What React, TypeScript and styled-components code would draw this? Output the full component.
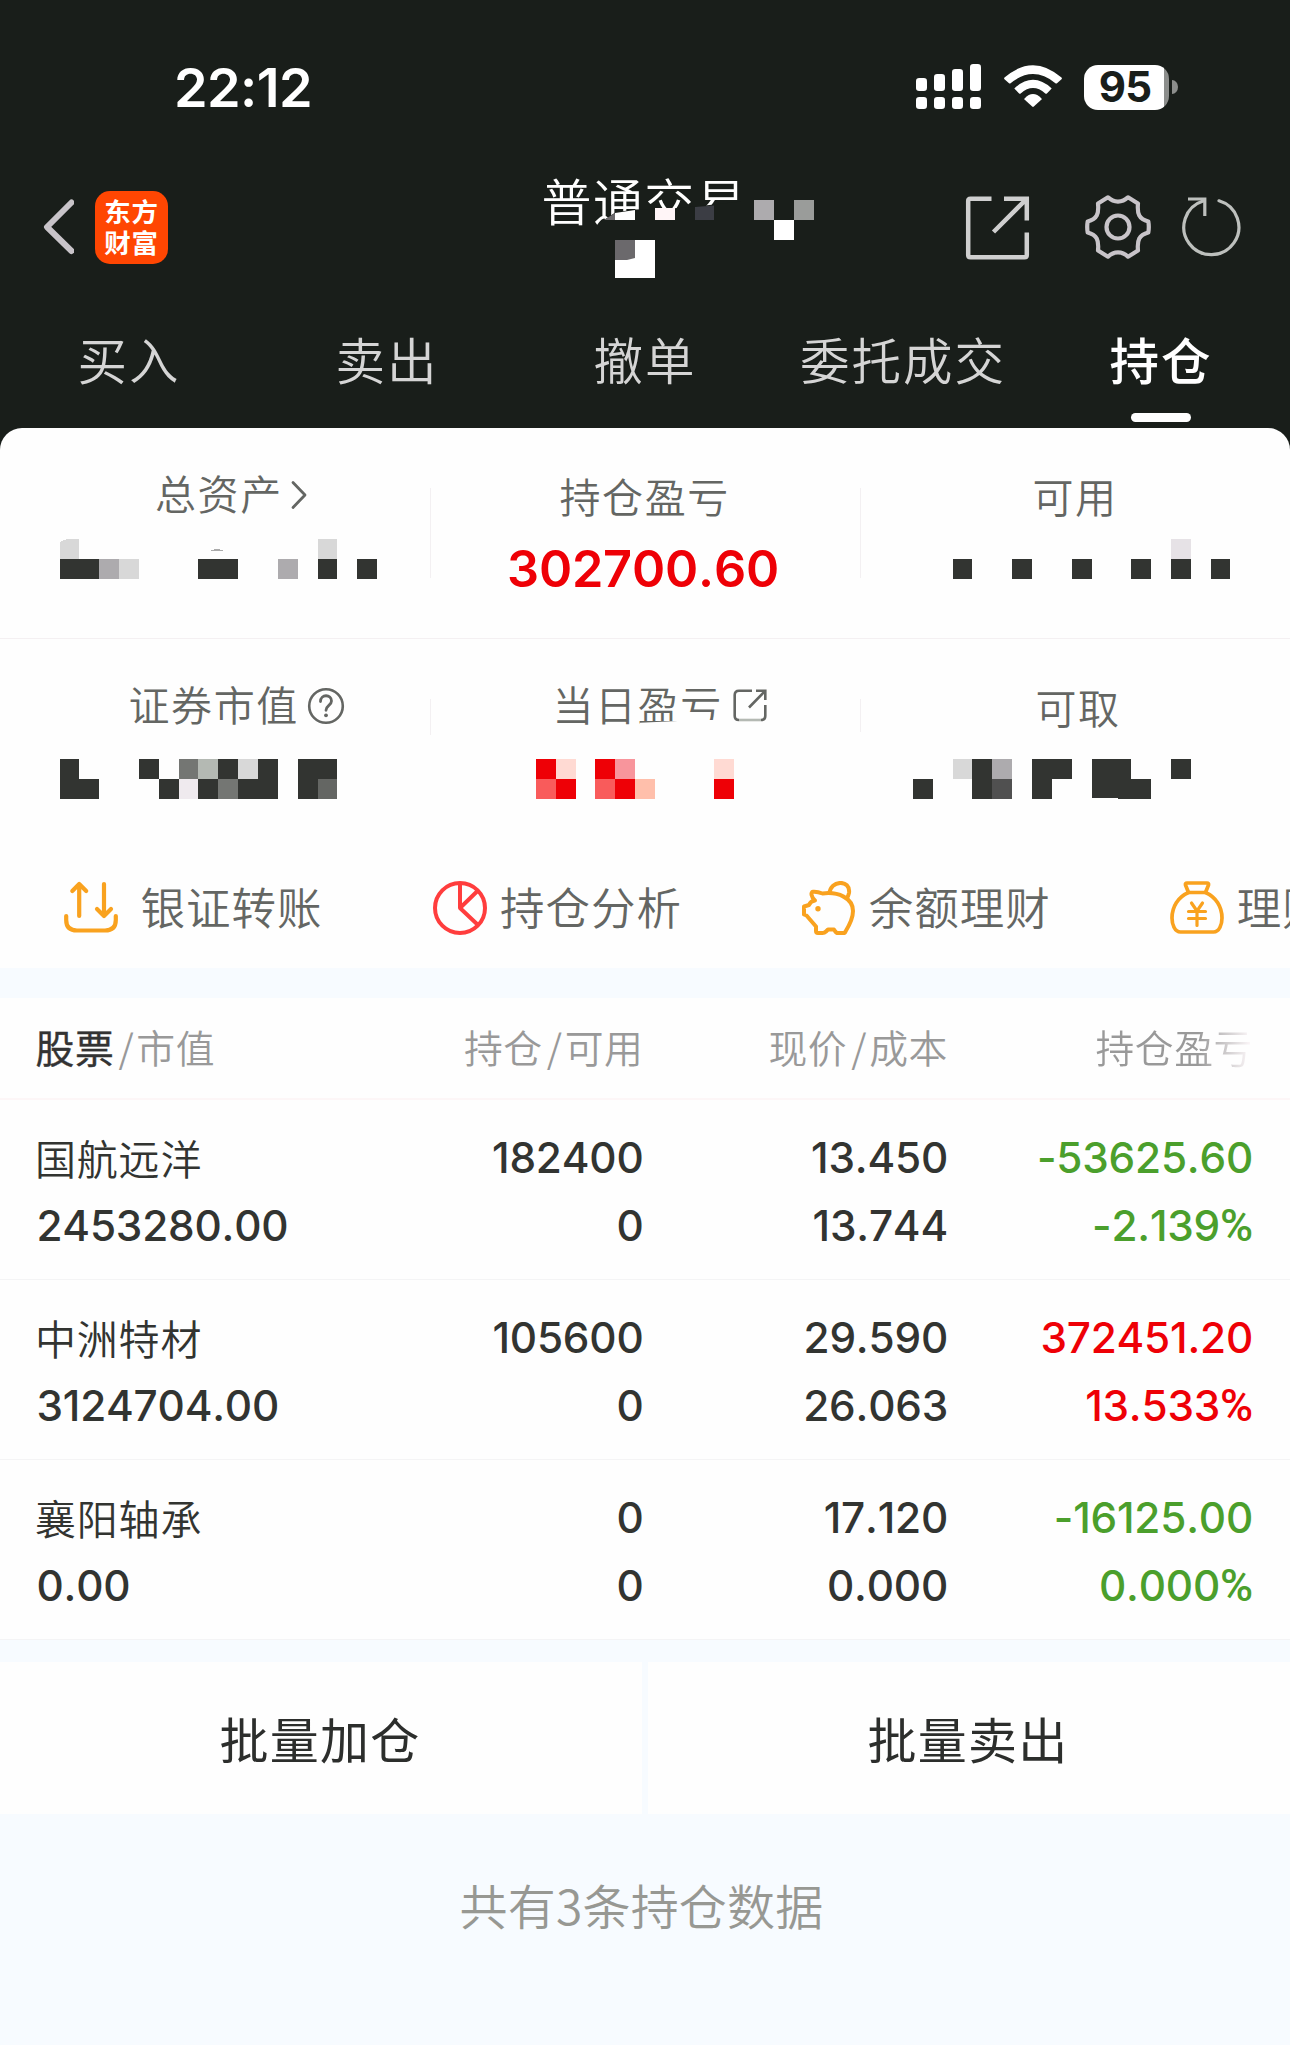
import React from "react";
import styled, { createGlobalStyle } from "styled-components";

const CJK = `"Noto Sans CJK SC", "Noto Sans", sans-serif`;
const NUM = `Inter, "Noto Sans CJK SC", sans-serif`;
const DARK = "#323431";
const RED = "#ee0006";
const GREEN = "#4b9f2c";
const INK = "#191e1a";

const Global = createGlobalStyle`
  *, *::before, *::after { box-sizing: border-box; }
  body { margin: 0; background: #f7fbff; font-family: ${CJK}; }
`;

const Screen = styled.div`
  width: 1290px;
  height: 2045px;
  display: flex;
  flex-direction: column;
  overflow: hidden;
  background: #f7fbff;
`;

const Top = styled.header`
  background: ${INK};
`;

const StatusBar = styled.div`
  height: 174px;
  padding: 0 112px 0 174px;
  display: flex;
  align-items: center;
  justify-content: space-between;
`;

const Clock = styled.span`
  padding-top: 1px;
  font: 600 54px/60px ${NUM};
  letter-spacing: -0.6px;
  color: #fff;
`;

const StatusIcons = styled.div`
  display: flex;
  align-items: center;
  gap: 22.5px;
`;

const Battery = styled.div`
  display: flex;
  align-items: center;
  gap: 3px;
`;

const BatteryBody = styled.span`
  width: 85px;
  height: 45px;
  border-radius: 14px;
  display: flex;
  align-items: center;
  justify-content: center;
  padding-right: 3px;
  background: linear-gradient(90deg, #fff 80px, #8c8e8c 80px);
  color: ${INK};
  font: 650 42px/44px ${NUM};
  letter-spacing: -0.8px;
`;

const BatteryTip = styled.span`
  width: 6px;
  height: 14px;
  border-radius: 0 6px 6px 0 / 0 7px 7px 0;
  background: #8c8e8c;
`;

const NavBar = styled.div`
  height: 106px;
  display: grid;
  grid-template-columns: 541.5px 1fr auto;
  align-items: center;
`;

const NavLeft = styled.div`
  display: flex;
  align-items: center;
  gap: 21px;
  padding-left: 43px;
`;

const AppBadge = styled.div`
  width: 73px;
  height: 73px;
  border-radius: 15px;
  background: #ff4602;
  color: #fff;
  display: flex;
  flex-direction: column;
  align-items: center;
  justify-content: center;
  font: 700 26.5px/31px ${CJK};
  letter-spacing: 0.8px;
  padding-bottom: 3px;
`;

const Title = styled.h1`
  position: relative;
  align-self: start;
  margin: 0;
  font: 350 50px/60px ${CJK};
  letter-spacing: 1.4px;
  color: #fff;
  margin-top: -5px;
`;

const TitleMask = styled.svg`
  position: absolute;
  left: 58.5px;
  top: 29px;
`;

const NavActions = styled.div`
  display: flex;
  align-items: center;
  padding-right: 46px;
`;

const Spacer = styled.span<{ $w: number }>`
  width: ${(p) => p.$w}px;
`;

const Tabs = styled.nav`
  height: 148px;
  padding-top: 49px;
  display: grid;
  grid-template-columns: repeat(5, 1fr);
`;

const Tab = styled.div<{ $active?: boolean }>`
  display: flex;
  flex-direction: column;
  align-items: center;
  gap: 24px;
  font: ${(p) => (p.$active ? 500 : 350)} 49.5px/60px ${CJK};
  letter-spacing: 2px;
  color: ${(p) => (p.$active ? "#fff" : "#d5d5d5")};
`;

const TabMark = styled.span`
  width: 60px;
  height: 9px;
  border-radius: 4.5px;
  background: #fff;
`;

const CardBack = styled.div`
  background: ${INK};
`;

const Card = styled.section`
  height: 540px;
  border-radius: 22px 22px 0 0;
  background: #fefefe;
  overflow: hidden;
`;

const SummaryRow = styled.div<{ $line?: boolean }>`
  height: 211px;
  display: grid;
  grid-template-columns: repeat(3, 430px);
  border-bottom: 1px solid ${(p) => (p.$line ? "#f4f0f2" : "transparent")};
`;

const SummaryCell = styled.div<{ $pad: number; $rule?: number }>`
  padding-top: ${(p) => p.$pad}px;
  background: ${(p) =>
    p.$rule ? `linear-gradient(#f3f0f2, #f3f0f2) 0 60px / 1px ${p.$rule}px no-repeat` : "none"};
`;

const SummaryLabel = styled.div<{ $left: number; $gap: number; $bottom: number }>`
  position: relative;
  height: 60px;
  margin-bottom: ${(p) => p.$bottom}px;
  padding-left: ${(p) => p.$left}px;
  display: flex;
  align-items: center;
  gap: ${(p) => p.$gap}px;
  font: 350 41px/60px ${CJK};
  letter-spacing: 1.6px;
  color: #646663;
`;

const LabelIcon = styled.svg`
  margin-top: 5px;
`;

const LabelMask = styled.svg`
  position: absolute;
  left: 190px;
  top: 40px;
`;

const SummaryValue = styled.div`
  font: 600 50.4px/59px ${NUM};
  font-kerning: none;
  letter-spacing: -0.2px;
  color: ${RED};
  text-align: center;
  padding-right: 4px;
`;

const QuickRow = styled.div`
  height: 118px;
  display: grid;
  grid-template-columns: 368.9px 368.9px 368px 368px;
  padding-left: 64px;
`;

const QuickItem = styled.div<{ $gap?: number }>`
  display: flex;
  align-items: center;
  gap: ${(p) => p.$gap ?? 13}px;
  white-space: nowrap;
  font: 350 44.5px/60px ${CJK};
  letter-spacing: 1px;
  color: #646663;
`;

const QuickText = styled.span`
  margin-top: -6px;
`;

const Table = styled.section`
  margin-top: 30px;
  background: #fefefe;
`;

const gridColumns = `
  display: grid;
  grid-template-columns: 300px 308px 304.5px 305px;
  padding-left: 35.5px;
`;

const TableHead = styled.div`
  ${gridColumns}
  height: 102px;
  padding-top: 18px;
  border-bottom: 2px solid #fdf6f7;
  font: 350 38.8px/60px ${CJK};
  letter-spacing: 0.6px;
  color: #999;
`;

const HeadCell = styled.div<{ $right?: boolean; $fade?: boolean }>`
  display: flex;
  justify-content: ${(p) => (p.$right ? "flex-end" : "flex-start")};
  color: ${(p) => (p.$fade ? "transparent" : "inherit")};
  background: ${(p) => (p.$fade ? "linear-gradient(90deg, #999 250px, #fbf6f8 302px)" : "none")};
  -webkit-background-clip: ${(p) => (p.$fade ? "text" : "border-box")};
  background-clip: ${(p) => (p.$fade ? "text" : "border-box")};
`;

const HeadStrong = styled.b`
  font-weight: 400;
  color: #333;
  -webkit-text-stroke: 0.4px #333;
`;

const Slash = styled.span`
  width: 22px;
  padding-left: 2px;
  text-align: center;
`;

const TableRow = styled.div`
  ${gridColumns}
  height: 180px;
  padding-top: 24px;
  border-bottom: 1px solid #f4f4f5;
`;

const StockCell = styled.div`
  display: flex;
  flex-direction: column;
  padding-left: 1px;
`;

const StockName = styled.span`
  font: 350 41px/66px ${CJK};
  letter-spacing: 0.8px;
  color: ${DARK};
  margin: 0 0 2px -1.5px;
`;

const Figure = styled.span<{ $color?: string }>`
  font: 550 42.3px/68px ${NUM};
  font-kerning: none;
  letter-spacing: -0.2px;
  color: ${(p) => p.$color ?? DARK};
`;

const Percent = styled.span`
  font-family: Roboto, sans-serif;
  font-weight: 500;
  font-size: 45px;
  line-height: 1;
`;

const FigureCell = styled.div`
  display: flex;
  flex-direction: column;
  align-items: flex-end;
`;

const Batch = styled.div`
  margin-top: 22px;
  height: 152px;
  display: grid;
  grid-template-columns: 1fr 1fr;
  gap: 6px;
`;

const BatchButton = styled.button`
  border: 0;
  padding: 0 2px 0 0;
  background: #fefefe;
  color: #2c2e2c;
  font: 400 49px/60px ${CJK};
  letter-spacing: 1.2px;
`;

const Footer = styled.p`
  margin: 60px 0 0;
  padding-right: 7px;
  text-align: center;
  font: 350 48px/60px ${CJK};
  letter-spacing: 0.2px;
  color: #979893;
`;

type Block = [x: number, y: number, w: number, h: number, fill?: string];

function Mosaic({ x, y, blocks, children }: { x: number; y: number; blocks: Block[]; children?: React.ReactNode }) {
  return (
    <svg width="430" height="40" viewBox={`${x} ${y} 430 40`} shapeRendering="crispEdges" display="block">
      {blocks.map(([bx, by, w, h, fill], i) => (
        <rect key={i} x={bx} y={by} width={w} height={h} fill={fill ?? DARK} />
      ))}
      {children}
    </svg>
  );
}

const totalBlocks: Block[] = [
  [60, 559, 39, 20], [99, 559, 20, 20, "#adabae"], [119, 559, 20, 20, "#d8d8d8"],
  [198, 559, 40, 20], [278, 559, 20, 20, "#adabae"], [318, 539, 19, 20, "#d8d8d8"],
  [318, 559, 19, 20], [357, 559, 20, 20],
];
const usableBlocks: Block[] = [
  [953, 559, 19, 20], [1012, 559, 20, 20], [1072, 559, 20, 20], [1131, 559, 20, 20],
  [1171, 539, 20, 20, "#e6e2e6"], [1171, 559, 20, 20], [1211, 559, 19, 20],
];
const marketBlocks: Block[] = [
  [60, 759, 19, 20], [60, 779, 39, 20], [139, 759, 20, 20], [159, 779, 20, 20],
  [179, 759, 19, 20, "#747673"], [179, 779, 19, 20, "#efeaee"], [198, 759, 20, 20, "#b4b9b3"],
  [198, 779, 20, 20], [218, 759, 20, 20], [218, 779, 20, 20, "#747673"],
  [238, 759, 20, 20, "#d8d8d8"], [238, 779, 20, 20], [258, 759, 20, 40],
  [298, 759, 39, 20], [298, 779, 20, 20], [318, 779, 19, 20, "#646663"],
];
const todayBlocks: Block[] = [
  [536, 759, 20, 20, RED], [556, 759, 20, 20, "#ffdad3"], [536, 779, 20, 20, "#f95b5b"],
  [556, 779, 20, 20, RED], [595, 759, 20, 20, RED], [615, 759, 20, 20, "#f8959c"],
  [595, 779, 20, 20, "#f95b5b"], [615, 779, 20, 20, RED], [635, 779, 20, 20, "#ffbfab"],
  [714, 759, 20, 20, "#ffdad3"], [714, 779, 20, 20, RED],
];
const drawableBlocks: Block[] = [
  [913, 779, 20, 20], [953, 759, 19, 20, "#d8d8d8"], [972, 759, 20, 40],
  [992, 759, 20, 20, "#adabae"], [992, 779, 20, 20, "#505050"], [1032, 759, 40, 20],
  [1032, 779, 20, 20], [1092, 759, 39, 20], [1131, 779, 20, 20], [1171, 759, 20, 20],
];

function Signal() {
  const tops = [78, 74, 69, 64];
  return (
    <svg width="65" height="46" viewBox="916 64 65 46" fill="#fff">
      {tops.map((t, i) => (
        <g key={t}>
          <rect x={916 + i * 18} y={t} width="11" height={91 - t} rx="3.2" />
          <rect x={916 + i * 18} y="97" width="11" height="12" rx="3.2" />
        </g>
      ))}
    </svg>
  );
}

function Wifi() {
  return (
    <svg width="58" height="44" viewBox="1003.5 65 58 44" fill="#fff">
      <path d="M1004 77.6 Q1032.5 52.8 1061 77.6 Q1061.8 78.4 1061 79.2 L1056.5 83.2 Q1055.7 83.8 1054.9 83.2 Q1032.5 65 1010.1 83.2 Q1009.3 83.8 1008.5 83.2 L1004 79.2 Q1003.2 78.4 1004 77.6 Z" />
      <path d="M1013.8 88.4 Q1032.5 71.2 1051.2 88.4 L1046.4 93.4 Q1045.6 94.1 1044.8 93.4 Q1032.5 82.7 1020.2 93.4 Q1019.4 94.1 1018.6 93.4 Z" />
      <path d="M1024 98.4 Q1032.5 89.6 1041 98.4 Q1041.4 99 1041 99.6 L1033.3 106.6 Q1032.5 107.3 1031.7 106.6 L1024 99.6 Q1023.6 99 1024 98.4 Z" />
    </svg>
  );
}

function Gear() {
  return (
    <svg width="70" height="70" viewBox="-35 -35 70 70" fill="none" stroke="#c8c4c9" strokeWidth="4.2" strokeLinejoin="round">
      <path d="M-10 -29.7 C-4 -24 4 -24 10 -29.7 L20 -23.5 C19 -13 21 -8 30.3 -5.5 Q31.3 0 30.3 5.5 C21 8 19 13 20 23.5 L10 29.7 C4 24 -4 24 -10 29.7 L-20 23.5 C-19 13 -21 8 -30.3 5.5 Q-31.3 0 -30.3 -5.5 C-21 -8 -19 -13 -20 -23.5 Z" />
      <circle r="11.5" />
    </svg>
  );
}

const rows = [
  { name: "国航远洋", value: "2453280.00", hold: "182400", free: "0", price: "13.450", cost: "13.744", pl: "-53625.60", pct: "-2.139", color: GREEN },
  { name: "中洲特材", value: "3124704.00", hold: "105600", free: "0", price: "29.590", cost: "26.063", pl: "372451.20", pct: "13.533", color: RED },
  { name: "襄阳轴承", value: "0.00", hold: "0", free: "0", price: "17.120", cost: "0.000", pl: "-16125.00", pct: "0.000", color: GREEN },
];

export default function App() {
  return (
    <Screen>
      <Global />
      <Top>
        <StatusBar>
          <Clock>22:12</Clock>
          <StatusIcons>
            <Signal />
            <Wifi />
            <Battery>
              <BatteryBody>95</BatteryBody>
              <BatteryTip />
            </Battery>
          </StatusIcons>
        </StatusBar>
        <NavBar>
          <NavLeft>
            <svg width="31" height="56" viewBox="43 199 31 56" fill="none" stroke="#c8c4c9" strokeWidth="6" strokeLinecap="round" strokeLinejoin="round">
              <path d="M71.5 202.5 L47 227 L71.5 251" />
            </svg>
            <AppBadge>
              <span>东方</span>
              <span>财富</span>
            </AppBadge>
          </NavLeft>
          <Title>
            普通交易
            <TitleMask width="216" height="82" viewBox="600 198 216 82">
              <path d="M604 220 L616 212 L636 209.5 L680 208 L705 205.5 L741 201.5 V234 H604 Z" fill={INK} />
              <path d="M604 220 L615 213 V220 Z" fill="#6b696c" />
              <path d="M615 213 L635 210 V220 H615 Z" fill="#fff" />
              <rect x="655" y="208" width="20" height="12" fill="#fff5f7" />
              <path d="M695 207 L714 205.5 V220 H695 Z" fill="#3b3d44" />
              <rect x="754" y="200" width="20" height="20" fill="#adabae" />
              <rect x="794" y="200" width="20" height="20" fill="#9a9c9a" />
              <rect x="774" y="220" width="20" height="20" fill="#fff" />
              <path d="M615 240 H655 V278 H615 Z" fill="#fff" />
              <path d="M615 240 H635 V258 L627 260 H615 Z" fill="#6b696c" />
            </TitleMask>
          </Title>
          <NavActions>
            <svg width="66" height="66" viewBox="965 194.5 66 66" fill="none" stroke="#cfcfcf" strokeWidth="4.5">
              <path d="M991.5 199.2 H970.5 Q968.2 199.2 968.2 201.5 V255.5 Q968.2 257.8 970.5 257.8 H1024.5 Q1026.8 257.8 1026.8 255.5 V233" />
              <path d="M1004 199.2 H1026.8 V221 M1026 200 L993.5 232.5" />
            </svg>
            <Spacer $w={52} />
            <Gear />
            <Spacer $w={29.5} />
            <svg width="62" height="66" viewBox="1182 195 62 66" fill="none" stroke="#bdc0bd" strokeWidth="3.2" strokeLinecap="round">
              <path d="M1219 201.8 A27.5 27.5 0 1 1 1203 202" />
              <path d="M1188 200 H1204.8 V217" strokeLinecap="butt" />
            </svg>
          </NavActions>
        </NavBar>
        <Tabs>
          <Tab>买入</Tab>
          <Tab>卖出</Tab>
          <Tab>撤单</Tab>
          <Tab>委托成交</Tab>
          <Tab $active>
            持仓
            <TabMark />
          </Tab>
        </Tabs>
      </Top>

      <CardBack>
        <Card>
          <SummaryRow $line>
            <SummaryCell $pad={34}>
              <SummaryLabel $left={155} $gap={7} $bottom={17}>
                总资产
                <LabelIcon width="18" height="30" viewBox="290 480.5 18 30" fill="none" stroke="#646663" strokeWidth="2.8" strokeLinecap="round" strokeLinejoin="round">
                  <path d="M293 483 L305 495.5 L293 508" />
                </LabelIcon>
              </SummaryLabel>
              <Mosaic x={0} y={539} blocks={totalBlocks}>
                <path d="M60 542 L67 539 H79 V559 H60 Z" fill="#d8d8d8" />
                <path d="M211 550.5 Q217 547.5 223 550.5 Z" fill="#aaa" />
              </Mosaic>
            </SummaryCell>
            <SummaryCell $pad={37} $rule={90}>
              <SummaryLabel $left={129.5} $gap={0} $bottom={14}>持仓盈亏</SummaryLabel>
              <SummaryValue>302700.60</SummaryValue>
            </SummaryCell>
            <SummaryCell $pad={37} $rule={90}>
              <SummaryLabel $left={172.5} $gap={0} $bottom={14}>可用</SummaryLabel>
              <Mosaic x={860} y={539} blocks={usableBlocks} />
            </SummaryCell>
          </SummaryRow>
          <SummaryRow>
            <SummaryCell $pad={34}>
              <SummaryLabel $left={128.5} $gap={8.5} $bottom={26}>
                证券市值
                <LabelIcon width="38" height="38" viewBox="0 0 38 38" fill="none" stroke="#646663" strokeWidth="2.6" strokeLinecap="round">
                  <circle cx="19" cy="19" r="16.8" />
                  <path d="M13.5 14.5 C13.5 6.8 24.5 7 24.5 14 C24.5 18.5 19 18.3 19 23.3" strokeWidth="2.8" />
                  <circle cx="19" cy="28.3" r="1.9" fill="#646663" stroke="none" />
                </LabelIcon>
              </SummaryLabel>
              <Mosaic x={0} y={759} blocks={marketBlocks} />
            </SummaryCell>
            <SummaryCell $pad={34} $rule={36}>
              <SummaryLabel $left={122.5} $gap={9.5} $bottom={26}>
                当日盈亏
                <LabelIcon width="36" height="36" viewBox="732 687 36 36" fill="none" stroke="#646663" strokeWidth="2.6">
                  <path d="M752 689.7 H739 Q734.7 689.7 734.7 694 V715 Q734.7 719 739 719" />
                  <path d="M765.3 704 V715 Q765.3 719 761 719" />
                  <path d="M739 719 H761" stroke="#b4b9b3" />
                  <path d="M756 689.7 H765.3 V699 M765 690 L749 706.5" />
                </LabelIcon>
                <LabelMask width="106" height="16" viewBox="620 713 106 16">
                  <path d="M640 722.8 L678 721 L684 720 H724 V729 H640 Z" fill="#fefefe" />
                </LabelMask>
              </SummaryLabel>
              <Mosaic x={430} y={759} blocks={todayBlocks} />
            </SummaryCell>
            <SummaryCell $pad={37} $rule={33}>
              <SummaryLabel $left={175.5} $gap={0} $bottom={23}>可取</SummaryLabel>
              <Mosaic x={860} y={759} blocks={drawableBlocks}>
                <path d="M1092 779 H1131 V799 L1092 797.5 Z" fill={DARK} />
              </Mosaic>
            </SummaryCell>
          </SummaryRow>
          <QuickRow>
            <QuickItem $gap={22.5}>
              <svg width="54" height="56" viewBox="64 881 54 56" fill="none" stroke="#f9a21f" strokeWidth="4.2" strokeLinecap="round" strokeLinejoin="round">
                <path d="M66.2 916 V920 Q66.2 930.5 77 930.5 H105 Q115.8 930.5 115.8 920 V916" />
                <path d="M79.2 916 V884.5 M72.3 891 L79.2 884 L86.2 891" />
                <path d="M104 884 V915.5 M97 909 L104 916 L111 909" />
              </svg>
              <QuickText>银证转账</QuickText>
            </QuickItem>
            <QuickItem>
              <svg width="54" height="56" viewBox="0 0 54 56" fill="none" stroke="#ff3d3d" strokeWidth="4">
                <circle cx="27" cy="27" r="25" />
                <path d="M27 2 V27 L45 9.5 M27 27 L45 44" strokeLinejoin="round" />
              </svg>
              <QuickText>持仓分析</QuickText>
            </QuickItem>
            <QuickItem>
              <svg width="54" height="56" viewBox="0 0 54 56" fill="none" stroke="#f9a21f" strokeWidth="4" strokeLinejoin="round">
                <path d="M13 19.5 C9 16 8.5 11 11 10.8 C15 10.5 18 11.5 20.5 12.5 C36 10.5 51 17 51 30 C51 37 47.5 44 43.5 50.5 Q43 52 41 52 H36 Q34 52 33 50 L32 48.5 H26 L24 50.5 Q22.5 52 20.5 52 H16 Q14 52 14 50 V45.5 L4.5 34.5 L2 33.5 V25.5 L7 24 Q8.5 20 13 19.5 Z" />
                <path d="M27.5 12.5 C28 -1 49 -2 47 12 Q46.5 15 44.5 17.5" />
                <circle cx="16" cy="27.8" r="2.7" fill="#f9a21f" stroke="none" />
              </svg>
              <QuickText>余额理财</QuickText>
            </QuickItem>
            <QuickItem>
              <svg width="54" height="56" viewBox="0 0 54 56" fill="none" stroke="#f9a21f" strokeWidth="3.7" strokeLinejoin="round" strokeLinecap="round">
                <path d="M17 2 H37 Q39 2 38.5 4 L35.5 11.5 H18.5 L15.5 4 Q15 2 17 2 Z" />
                <path d="M18.5 11.5 C8 16 2 26 2 37 C2 43 4.5 51 10.5 51 H43.5 C49.5 51 52 43 52 37 C52 26 46 16 35.5 11.5" />
                <path d="M21.5 22 L27 30 L32.5 22 M18.5 30.5 H35.5 M18.5 37.5 H35.5 M27 30 V44.5" strokeWidth="3.2" />
              </svg>
              <QuickText>理财</QuickText>
            </QuickItem>
          </QuickRow>
        </Card>
      </CardBack>

      <Table>
        <TableHead>
          <HeadCell>
            <HeadStrong>股票</HeadStrong>
            <Slash>/</Slash>市值
          </HeadCell>
          <HeadCell $right>持仓<Slash>/</Slash>可用</HeadCell>
          <HeadCell $right>现价<Slash>/</Slash>成本</HeadCell>
          <HeadCell $right $fade>持仓盈亏</HeadCell>
        </TableHead>
        {rows.map((r) => (
          <TableRow key={r.name}>
            <StockCell>
              <StockName>{r.name}</StockName>
              <Figure>{r.value}</Figure>
            </StockCell>
            <FigureCell>
              <Figure>{r.hold}</Figure>
              <Figure>{r.free}</Figure>
            </FigureCell>
            <FigureCell>
              <Figure>{r.price}</Figure>
              <Figure>{r.cost}</Figure>
            </FigureCell>
            <FigureCell>
              <Figure $color={r.color}>{r.pl}</Figure>
              <Figure $color={r.color}>
                {r.pct}
                <Percent>%</Percent>
              </Figure>
            </FigureCell>
          </TableRow>
        ))}
      </Table>

      <Batch>
        <BatchButton>批量加仓</BatchButton>
        <BatchButton>批量卖出</BatchButton>
      </Batch>
      <Footer>共有3条持仓数据</Footer>
    </Screen>
  );
}
